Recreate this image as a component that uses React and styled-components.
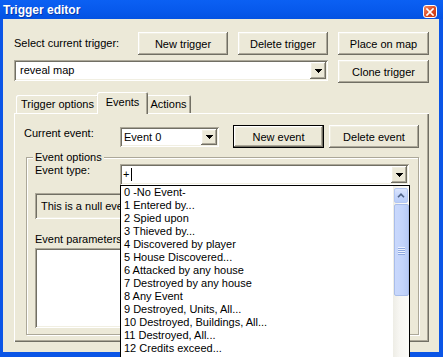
import React from 'react';
import styled, { createGlobalStyle, css } from 'styled-components';

const C = {
  face: '#ece9d8',
  hi: '#ffffff',
  light: '#f1efe2',
  shadow: '#aca899',
  dark: '#716f64',
  frame: '#0b55e6',
};

const FONT = `"Liberation Sans", Arial, sans-serif`;

const Global = createGlobalStyle`
  html, body { margin: 0; padding: 0; background: ${C.frame}; }
  body { font-family: ${FONT}; font-size: 11px; color: #000; }
  #root { width: 443px; height: 357px; overflow: hidden; }
  * { box-sizing: border-box; }
`;

const raised = css`
  box-shadow: inset -1px -1px ${C.dark}, inset 1px 1px ${C.hi},
    inset -2px -2px ${C.shadow}, inset 2px 2px ${C.light};
`;
const sunken = css`
  box-shadow: inset 1px 1px ${C.shadow}, inset -1px -1px ${C.hi},
    inset 2px 2px ${C.dark}, inset -2px -2px ${C.light};
`;

const Window = styled.div`
  width: 443px;
  height: 357px;
  display: flex;
  flex-direction: column;
  overflow: hidden;
  background: ${C.frame};
`;

const TitleBar = styled.div`
  flex: none;
  height: 19px;
  display: flex;
  justify-content: space-between;
  align-items: flex-start;
  padding: 0 6px 0 3px;
  background: linear-gradient(180deg, #0b60f3 0%, #0759ec 55%, #0452e2 100%);
`;

const Title = styled.div`
  font: bold 12px ${FONT};
  color: #fff;
  line-height: 17px;
  padding-top: 2px;
  text-shadow: 1px 1px rgba(8, 30, 120, 0.55);
`;

const CloseBtn = styled.div`
  width: 14px;
  height: 13px;
  margin-top: 5px;
  border: 1px solid #fff;
  border-radius: 3px;
  background: linear-gradient(135deg, #f08a66 0%, #dc4a22 55%, #c3380f 100%);
  display: flex;
  align-items: center;
  justify-content: center;
`;

const Body = styled.div`
  flex: 1;
  display: flex;
  flex-direction: column;
  background: ${C.face};
  border-style: solid;
  border-color: ${C.frame};
  border-width: 0 4px 5px 3px;
  padding: 13px 10px 10px 11px;
`;

const TopGrid = styled.div`
  display: grid;
  grid-template-columns: 114px 90px 90px 91px;
  column-gap: 10px;
  row-gap: 5px;
  align-items: start;
`;

const Label = styled.div`
  line-height: 13px;
  white-space: nowrap;
  width: ${(p) => (p.$w ? `${p.$w}px` : 'auto')};
  flex: none;
  padding-top: ${(p) => p.$pt || 0}px;
  margin-top: ${(p) => p.$mt || 0}px;
  align-self: ${(p) => (p.$center ? 'center' : 'auto')};
`;

const Button = styled.button`
  height: 23px;
  width: ${(p) => (p.$w ? `${p.$w}px` : '100%')};
  flex: none;
  margin: 0 0 0 ${(p) => p.$ml || 0}px;
  padding: 0;
  border: ${(p) => (p.$default ? '1px solid #000' : 'none')};
  background: ${C.face};
  font: 11px ${FONT};
  color: #000;
  ${raised}
`;

const Combo = styled.div`
  height: ${(p) => p.$h || 21}px;
  width: ${(p) => (p.$w ? `${p.$w}px` : 'auto')};
  flex: ${(p) => (p.$w ? 'none' : '1')};
  margin-top: ${(p) => p.$mt || 0}px;
  grid-column: ${(p) => p.$span || 'auto'};
  background: #fff;
  ${sunken}
  display: flex;
  align-items: stretch;
  padding: 2px;
  position: relative;
`;

const ComboText = styled.div`
  flex: 1;
  display: flex;
  align-items: center;
  padding-left: ${(p) => p.$pl ?? 2}px;
  white-space: nowrap;
  overflow: hidden;
  line-height: 13px;
`;

const Caret = styled.span`
  display: inline-block;
  width: 1px;
  height: 13px;
  background: #000;
  margin-left: 2px;
`;

const ComboArrow = styled.div`
  width: 16px;
  flex: none;
  background: ${C.face};
  ${raised}
  display: flex;
  align-items: center;
  justify-content: center;
`;

const Arrow = () => (
  <svg width="7" height="4" viewBox="0 0 7 4" shapeRendering="crispEdges">
    <polygon points="0,0 7,0 3.5,4" fill="#000" />
  </svg>
);

const TabRow = styled.div`
  display: flex;
  align-items: flex-end;
  height: 21px;
  margin-top: 9px;
  padding-left: 2px;
  position: relative;
  z-index: 1;
`;

const Tab = styled.div`
  width: ${(p) => p.$w}px;
  height: ${(p) => (p.$active ? 22 : 18)}px;
  margin: 0 ${(p) => (p.$active ? -2 : 0)}px ${(p) => (p.$active ? -1 : 0)}px;
  position: relative;
  z-index: ${(p) => (p.$active ? 2 : 1)};
  background: ${C.face};
  border-radius: 2px 2px 0 0;
  box-shadow: inset 1px 1px ${C.hi}, inset -1px 0 ${C.dark}, inset -2px 0 ${C.shadow};
  display: flex;
  justify-content: center;
  align-items: ${(p) => (p.$active ? 'flex-start' : 'center')};
  padding-top: ${(p) => (p.$active ? 4 : 1)}px;
  line-height: 13px;
  white-space: nowrap;
`;

const Panel = styled.div`
  flex: 1;
  display: flex;
  flex-direction: column;
  background: ${C.face};
  box-shadow: inset 1px 1px ${C.hi}, inset -1px -1px ${C.dark}, inset -2px -2px ${C.shadow};
  padding: 12px 10px 7px 10px;
`;

const Row = styled.div`
  display: flex;
  align-items: flex-start;
  margin-top: ${(p) => p.$mt || 0}px;
`;

const Group = styled.div`
  flex: 1;
  display: flex;
  flex-direction: column;
  margin: 9px 0 0 2px;
  border: 1px solid ${C.shadow};
  box-shadow: inset 1px 1px ${C.hi}, 1px 1px ${C.hi};
  padding: 6px 9px 6px 8px;
`;

const GroupTitle = styled.div`
  align-self: flex-start;
  margin: -13px 0 0 -2px;
  padding: 0 2px;
  line-height: 13px;
  background: ${C.face};
`;

const ReadOnlyBox = styled.div`
  height: 26px;
  margin-top: 8px;
  background: ${C.face};
  ${sunken}
  padding: 0 0 0 6px;
  display: flex;
  align-items: center;
  white-space: nowrap;
  overflow: hidden;
`;

const ParamBox = styled.div`
  flex: 1;
  margin-top: 2px;
  background: #fff;
  ${sunken}
`;

const ComboWrap = styled.div`
  flex: 1;
  position: relative;
  display: flex;
`;

const DropList = styled.div`
  position: absolute;
  top: 100%;
  left: 0;
  width: calc(100% + 1px);
  height: 200px;
  z-index: 10;
  background: #fff;
  border: 1px solid #000;
  display: flex;
`;

const Items = styled.div`
  flex: 1;
  display: flex;
  flex-direction: column;
`;

const Item = styled.div`
  height: 13px;
  line-height: 13px;
  padding-left: 3px;
  white-space: nowrap;
  font-size: 11px;
`;

const ScrollBar = styled.div`
  width: 16px;
  flex: none;
  background: linear-gradient(90deg, #eeede6 0%, #f7f6f2 40%, #fbfbf8 100%);
  display: flex;
  flex-direction: column;
  align-items: center;
  padding-top: 2px;
`;

const ScrollBtn = styled.div`
  width: 14px;
  height: 15px;
  border: 1px solid #b4c7f2;
  border-radius: 2px;
  background: linear-gradient(180deg, #dbe5fd 0%, #c6d6fb 50%, #b9cdf8 100%);
  display: flex;
  align-items: center;
  justify-content: center;
`;

const Thumb = styled.div`
  width: 15px;
  height: 92px;
  margin-top: 1px;
  border: 1px solid #a9bde9;
  border-radius: 2px;
  background: linear-gradient(90deg, #c9d8fc 0%, #c3d4fb 60%, #b8cbf6 100%);
  display: flex;
  flex-direction: column;
  align-items: center;
  justify-content: center;
  gap: 1px;
`;

const Grip = styled.div`
  width: 7px;
  height: 1px;
  background: #eef3fe;
  box-shadow: 0 1px #8fa9e0;
`;

const events = [
  '0 -No Event-',
  '1 Entered by...',
  '2 Spied upon',
  '3 Thieved by...',
  '4 Discovered by player',
  '5 House Discovered...',
  '6 Attacked by any house',
  '7 Destroyed by any house',
  '8 Any Event',
  '9 Destroyed, Units, All...',
  '10 Destroyed, Buildings, All...',
  '11 Destroyed, All...',
  '12 Credits exceed...',
];

export default function App() {
  return (
    <>
      <Global />
      <Window>
        <TitleBar>
          <Title>Trigger editor</Title>
          <CloseBtn>
            <svg width="8" height="8" viewBox="0 0 8 8">
              <path d="M1 1 L7 7 M7 1 L1 7" stroke="#fff" strokeWidth="1.7" strokeLinecap="square" />
            </svg>
          </CloseBtn>
        </TitleBar>
        <Body>
          <TopGrid>
            <Label $center>Select current trigger:</Label>
            <Button>New trigger</Button>
            <Button>Delete trigger</Button>
            <Button>Place on map</Button>
            <Combo $span="1 / 4">
              <ComboText $pl={4}>reveal map</ComboText>
              <ComboArrow><Arrow /></ComboArrow>
            </Combo>
            <Button>Clone trigger</Button>
          </TopGrid>

          <TabRow>
            <Tab $w={83}>Trigger options</Tab>
            <Tab $w={51} $active>Events</Tab>
            <Tab $w={45}>Actions</Tab>
          </TabRow>

          <Panel>
            <Row>
              <Label $w={96} $pt={2}>Current event:</Label>
              <Combo $w={99} $h={20} $mt={2}>
                <ComboText $pl={2}>Event 0</ComboText>
                <ComboArrow><Arrow /></ComboArrow>
              </Combo>
              <Button $w={91} $ml={14} $default>New event</Button>
              <Button $w={90} $ml={5}>Delete event</Button>
            </Row>

            <Group>
              <GroupTitle>Event options</GroupTitle>
              <Row>
                <Label $w={85}>Event type:</Label>
                <ComboWrap>
                  <Combo>
                    <ComboText $pl={1}>+<Caret /></ComboText>
                    <ComboArrow><Arrow /></ComboArrow>
                  </Combo>
                  <DropList>
                    <Items>
                      {events.map((e) => (
                        <Item key={e}>{e}</Item>
                      ))}
                    </Items>
                    <ScrollBar>
                      <ScrollBtn>
                        <svg width="8" height="5" viewBox="0 0 8 5">
                          <path d="M1 4.2 L4 1.2 L7 4.2" fill="none" stroke="#4d6185" strokeWidth="1.6" />
                        </svg>
                      </ScrollBtn>
                      <Thumb>
                        <Grip />
                        <Grip />
                        <Grip />
                        <Grip />
                      </Thumb>
                    </ScrollBar>
                  </DropList>
                </ComboWrap>
              </Row>
              <ReadOnlyBox>This is a null event</ReadOnlyBox>
              <Label $mt={14}>Event parameters:</Label>
              <ParamBox />
            </Group>
          </Panel>
        </Body>
      </Window>
    </>
  );
}
